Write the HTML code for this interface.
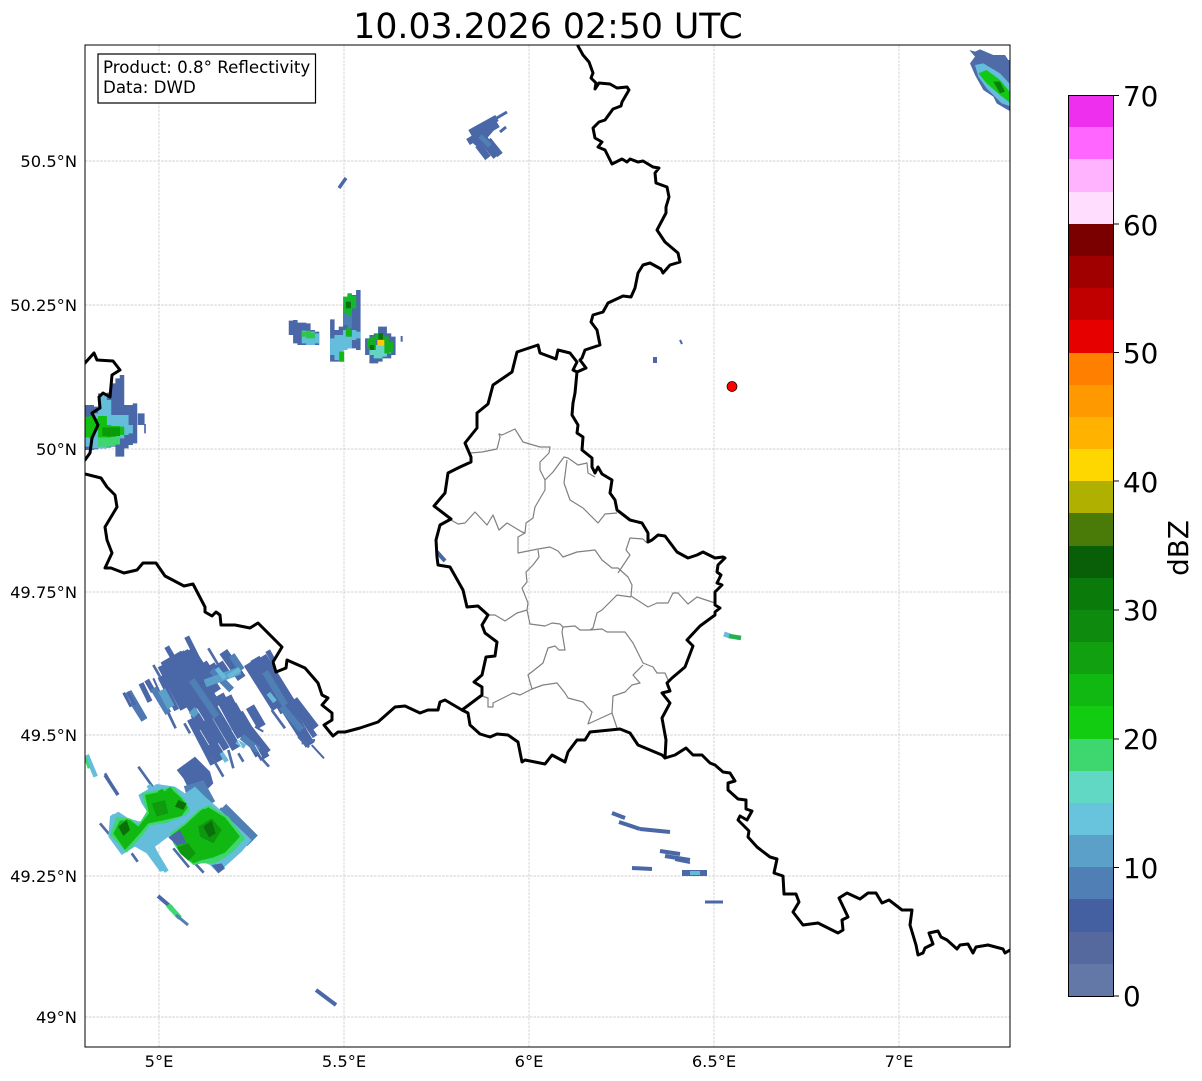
<!DOCTYPE html>
<html><head><meta charset="utf-8"><style>
html,body{margin:0;padding:0;background:#fff}
svg{display:block;font-family:"DejaVu Sans","Liberation Sans",sans-serif}
</style></head><body>
<svg width="1202" height="1081" viewBox="0 0 1202 1081" xmlns="http://www.w3.org/2000/svg">
<rect width="1202" height="1081" fill="#fff"/>
<defs><clipPath id="ax"><rect x="85" y="45" width="925" height="1002"/></clipPath></defs>
<text x="548" y="38" font-size="34.7" text-anchor="middle" fill="#000">10.03.2026 02:50 UTC</text>

<g stroke="#c2c2c2" stroke-width="0.7" stroke-dasharray="2.6 1.2" fill="none">
<path d="M159 45V1047M344 45V1047M529 45V1047M714 45V1047M899 45V1047"/>
<path d="M85 161H1010M85 305H1010M85 449H1010M85 592H1010M85 735H1010M85 876H1010M85 1017H1010"/>
</g>

<g clip-path="url(#ax)">
<!-- SW cluster upper -->
<g transform="translate(85,630) scale(.33333)" fill="none">
<path stroke="#4a67a8" stroke-width="31" d="M232 105L300 235M240 90L345 270M258 80L355 250M275 70L390 260M295 65L395 230M312 60L395 185M352 100L392 160M375 105L405 155M400 100L430 145M320 265L390 400M330 250L410 390M350 240L420 360M375 220L455 355M402 195L470 320M425 200L490 330M440 225L525 375M460 250L540 385M490 300L545 370M490 100L575 235M510 85L600 245M530 80L620 225M560 170L660 325M590 205L675 345"/>
<path stroke="#4a67a8" stroke-width="16" d="M305 20L340 90M245 50L268 90M548 62L565 92M290 65L312 102M168 160L195 215M185 150L205 185M225 140L275 240M620 215L690 320"/>
<path stroke="#4f6ba8" stroke-width="8" d="M370 55L400 105M205 105L225 140M60 430L98 495M160 410L210 480M250 250L272 295M298 280L315 310M380 380L415 440M430 360L445 415M460 370L475 395M525 380L552 410M560 240L600 295M640 320L672 352M650 340L690 330"/>
<path stroke="#4a67a8" stroke-width="6" d="M680 345L717 385M510 290L535 305M205 145L270 290"/>
<path stroke="#4a67a8" stroke-width="28" d="M415 65L470 145M625 210L690 295M495 230L530 290"/>
<path stroke="#4f78b2" stroke-width="20" d="M130 185L178 268M143 215L178 270"/>
<path stroke="#4a67a8" stroke-width="9" d="M116 188L138 230M128 185L150 225"/>
<path stroke="#4f7fb5" stroke-width="20" d="M205 175L250 250M320 150L395 260M470 320L520 360M540 125L600 225M590 230L650 300M380 120L440 180M440 75L470 120"/>
<path stroke="#5ba0c8" stroke-width="24" d="M230 180L258 232M360 160L465 122M320 240L335 255"/>
<path stroke="#68b8da" stroke-width="14" d="M395 115L420 145M430 140L465 118M455 335L480 350M410 368L425 395M550 190L570 215"/>
<path stroke="#fff" stroke-width="2" d="M335 235L358 272M345 300L372 345M440 300L470 350M400 340L425 380M510 345L530 380"/>
<path fill="#4a67a8" d="M275 420L330 380L375 425L385 460L370 475L345 460L310 475L295 445Z"/>
</g>
<!-- SW cluster lower -->
<g transform="translate(85,630) scale(.33333)" fill="none">
<path stroke="#4f6ba8" stroke-width="8" d="M45 580L72 612M140 670L158 695M265 655L312 712M330 700L356 728"/>
<path stroke="#4f7fb5" stroke-width="24" d="M300 480L350 465L380 520M320 470L400 560M415 530L510 625M400 540L495 640"/>
<path fill="#64bddb" d="M160 495L215 462L270 470L300 490L330 470L360 500L395 530L500 630L470 665L420 710L400 730L375 705L340 690L310 650L250 620L210 650L245 722L225 725L185 670L150 650L110 675L70 620L75 560L100 545L130 565L165 575L190 550L170 520Z"/>
<path stroke="#64bddb" stroke-width="14" d="M80 555L115 600M190 465L230 520M200 650L245 725"/>
<path fill="#4a67a8" d="M380 705L410 700L420 715L400 730Z"/>
<path fill="#3ed66e" d="M170 490L265 470L300 510L315 540L300 560L240 580L195 585L170 620L125 668L75 615L95 560L135 565L160 585L185 545Z"/>
<path fill="#12b812" d="M180 495L260 478L290 505L308 532L290 558L240 570L190 580L165 610L120 660L85 610L105 572L135 570L160 590L192 550Z"/>
<path fill="#64bddb" d="M165 640L200 605L245 580L300 555L305 580L250 620L210 650Z"/>
<path fill="#3ed66e" d="M255 610L300 578L340 540L372 525L430 560L480 625L440 670L390 700L350 700L325 705L285 670L265 640Z"/>
<path fill="#12b812" d="M260 615L300 585L340 548L370 532L420 562L465 620L420 668L385 682L345 692L325 700L290 672L270 640Z"/>
<path stroke="#12b812" stroke-width="16" d="M225 480L265 545M250 475L290 535M350 540L400 620M320 570L370 660M120 570L140 610"/>
<path fill="#0e960e" d="M340 590L380 565L410 600L385 640L345 620ZM276 652L310 640L332 670L310 692L288 672Z"/>
<path fill="#0a700a" d="M100 590L125 570L135 600L115 618ZM355 590L380 572L392 610L372 622ZM280 510L305 520L295 540L270 530Z"/>
<path fill="#4a67a8" d="M250 622L285 600L305 640L275 645Z"/>
<path fill="#0e9c0e" d="M200 520L240 510L250 550L215 560Z"/>
</g>
<!-- W edge streak -->
<g transform="translate(85,630) scale(.33333)" fill="none">
<path stroke="#64bddb" stroke-width="14" d="M5 375L32 440"/>
<path stroke="#3ed66e" stroke-width="8" d="M2 385L12 415"/>
</g>
<!-- West cluster -->
<g transform="translate(85,350) scale(.33333)" fill="none" stroke-width="13.500">
<path stroke="#4a67a8" d="M7 165V300M20 165V300M33 170V298M46 130V295M59 130V295M72 128V293M85 100V290M98 85V320M111 75V320M124 165V295M137 165V285M150 160V280M165 190V225M172 190V225"/>
<path stroke="#4a67a8" stroke-width="5" d="M180 222V250"/>
<path stroke="#64bddb" d="M7 205V290M20 200V295M33 190V295M46 135V295M59 135V295M72 150V290M85 195V285M98 195V280M111 195V265M124 195V255M137 225V250"/>
<path stroke="#3ed66e" d="M46 262V290M59 262V290M72 262V290M85 260V288M98 258V284"/>
<path stroke="#12c012" d="M7 200V262M20 198V265M33 205V240M46 198V262M59 198V262M72 225V262M85 228V260M98 228V258M111 230V255"/>
<path stroke="#0a9a0a" d="M59 232V258M72 232V260M85 232V260M98 232V258"/>
</g>
<!-- Central cluster -->
<g transform="translate(280,280) scale(.33333)" fill="none" stroke-width="13.500">
<path stroke="#4a67a8" d="M33 122V165M46 120V190M59 128V195M72 128V195M85 130V195M98 150V195M111 155V195M157 118V245M170 150V245M183 140V245M196 70V205M209 40V205M222 45V205M235 30V210M262 175V225M275 165V250M288 160V250M301 140V245M314 140V235M327 160V235M340 170V225"/>
<path stroke="#4a67a8" stroke-width="6" d="M365 168V185"/>
<path stroke="#64bddb" d="M72 152V190M85 155V195M98 155V195M111 160V190M157 175V225M170 165V240M183 165V245M196 150V210M209 170V205M222 150V180M235 155V175"/>
<path stroke="#4a80b4" d="M196 85V135M209 105V145"/>
<path stroke="#64d4c4" d="M275 185V225M288 195V235M301 195V235M314 195V230M327 190V220"/>
<path stroke="#2cc84a" d="M85 152V175M72 155V170M98 158V175"/>
<path stroke="#14b830" d="M196 50V100M209 42V105M222 48V85"/>
<path stroke="#0a700a" stroke-width="15" d="M205 65V85"/>
<path stroke="#12b812" stroke-width="15" d="M205 145V170M185 215V245"/>
<path stroke="#12b01e" d="M268 175V205M281 170V210M294 160V180M307 165V180M320 170V220M333 185V218"/>
<path stroke="#0a700a" d="M302 160V178M276 195V210"/>
<path fill="#ffc800" stroke="none" d="M292 180L313 180L313 197L292 197Z"/>
</g>
<!-- NE cluster -->
<g transform="translate(950,40) scale(.33333)">
<path fill="#4f6ba8" d="M58 30L75 35L90 28L130 45L165 45L175 60L183 60L183 215L165 205L140 190L130 170L100 150L75 105L60 70L75 50Z"/>
<path fill="#64bddb" d="M75 75L100 70L150 100L183 135L183 200L155 190L110 145L85 110Z"/>
<path fill="#12c812" d="M85 100L110 90L150 120L183 160L183 190L150 165L110 130Z"/>
<path fill="#0a800a" d="M130 125L150 125L165 155L150 160Z"/>
</g>
<!-- North cluster -->
<g fill="none" stroke="#4a67a8">
<path stroke-width="3" d="M507 112L490 122M500 132L506 127"/>
<path stroke-width="7" d="M497 118L470 133M498 124L468 142M478 145L488 158M488 140L500 155"/>
<path stroke-width="9" d="M490 128L475 145M484 140L497 156"/>
</g>
<path stroke="#4f7fb5" stroke-width="5" fill="none" d="M480 136L490 146"/>
<path stroke="#4a67a8" stroke-width="3.500" fill="none" d="M339 188L346 178"/>
<!-- small echoes -->
<g fill="none" stroke="#4a67a8">
<path stroke-width="4" d="M655 357V363M437 552L445 561"/>
<path stroke-width="2" d="M680 340L682 344"/>
<path stroke-width="4" d="M612 813L625 818M619 822L640 829M640 829L670 832M632 868L652 869"/>
<path stroke-width="4" d="M660 851L680 854M665 856L690 860"/>
<path stroke-width="2" d="M675 860L690 863"/>
<path stroke-width="6" d="M682 873H707"/>
<path stroke-width="3" d="M705 902H723"/>
<path stroke-width="4" d="M158 896L172 908M316 990L336 1005"/>
<path stroke-width="3.500" d="M105 775L118 795"/>
</g>
<path stroke="#62bcd8" stroke-width="4" fill="none" d="M690 873H700"/>
<path stroke="#64bddb" stroke-width="5" fill="none" d="M724 634L730 636"/>
<path stroke="#22b050" stroke-width="4.500" fill="none" d="M729 636L741 638"/>
<path stroke="#3ed66e" stroke-width="5" fill="none" d="M168 905L180 918"/>
<path stroke="#4f7fb5" stroke-width="3" fill="none" d="M176 915L188 925"/>

<!-- admin lines -->
<g fill="none" stroke="#808080" stroke-width="1.2" stroke-linejoin="round">
<path d="M470 453L482 452L497 449L500 437L499 434L502 435L515 429L523 442L540 447L550 447L549 453L540 462L540 470L545 480L545 490L535 507L533 518L526 523L525 533L518 537L518 553L538 549L550 547L558 551L563 557L577 552L595 550L602 560L612 568L618 568L628 577L632 585L631 596L648 607L657 603L668 603L673 593L678 593L688 604L697 597L715 603"/>
<path d="M545 480L553 472L564 457L568 458L578 465L587 463L588 473L595 477"/>
<path d="M567 460L564 483L570 500L583 508L598 523L605 514L617 513"/>
<path d="M451 520L458 524L465 523L475 512L487 525L493 515L499 530L507 523L522 532L525 533"/>
<path d="M647 543L643 539L630 538L626 550L630 555L620 570L618 573"/>
<path d="M538 550L539 557L533 565L526 572L527 582L522 588L528 603L527 610L530 624L545 626L552 623L560 624L563 627L575 626L580 630L590 630"/>
<path d="M488 615L495 615L505 621L517 613L527 610"/>
<path d="M631 597L617 595L602 610L597 613L593 628L590 630"/>
<path d="M590 630L602 629L607 632L625 632L633 643L643 663L653 667L657 673L665 673L668 680"/>
<path d="M643 665L633 675L640 683L632 685L625 692L613 696L612 713L617 728"/>
<path d="M612 713L588 724L592 712L583 702L568 698L565 693L557 683L543 685L532 689L528 675L543 663L548 648L555 646L559 650L565 650L562 632L563 627"/>
<path d="M532 689L520 695L513 693L493 703L493 707L488 707L488 698L482 696"/>
</g>
<!-- country borders -->
<g fill="none" stroke="#000" stroke-width="3" stroke-linejoin="round" stroke-linecap="round">
<path d="M578 46L583 55L589 62L593 73L591 78L596 83L595 89L599 83L610 84L617 88L627 87L629 90L622 102L621 106L613 109L605 120L599 122L593 128L595 138L602 142L598 147L605 150L612 164L622 159L627 162L630 159L638 162L643 161L653 167L659 168L655 173L656 183L667 187L669 197L666 207L666 213L657 230L665 242L678 253L680 262L670 265L663 273L661 269L650 263L643 265L638 273L635 288L631 297L623 296L608 303L603 312L593 315L591 322L597 330L600 345L585 350L582 358L580 360L586 368L577 372L573 370L577 362L570 353L558 350L556 359L540 353L538 345L517 352L512 372L493 385L488 404L477 413L477 428L465 443L471 457L471 462L460 467L448 473L445 493L434 506L451 519L440 525L436 540L437 557L438 565L450 567L463 590L467 607L478 606L488 615L482 625L485 633L497 642L495 656L486 657L482 675L474 682L482 687L482 695L462 710L468 713L470 725L480 734L490 737L497 734L508 735L518 742L522 762L525 760L545 764L552 755L565 762L568 752L577 740L585 740L590 732L620 729L630 733L638 745L662 755L665 758L666 740L662 718L670 703L662 693L670 691L667 683L672 678L685 667L693 646L687 640L700 626L715 615L715 612L720 608L715 605L715 592L722 585L717 583L721 575L717 572L718 565L725 558L723 557L715 558L703 552L697 555L688 558L677 552L665 536L658 535L652 540L648 542L648 533L642 523L630 520L617 510L615 500L610 493L612 480L602 474L598 467L595 473L592 467L592 458L582 450L583 437L577 433L578 425L572 415L573 403L575 393L577 372"/>
<path d="M665 758L675 755L686 748L693 755L702 755L710 763L715 765L723 772L730 773L735 781L728 783L728 790L738 799L746 800L746 809L752 811L747 820L740 816L738 820L749 831L748 837L757 847L770 857L777 859L774 873L783 876L784 894L796 894L799 902L793 912L803 925L818 923L838 933L843 930L842 920L848 917L839 898L847 893L860 899L868 893L876 893L882 903L889 900L902 910L912 910L910 925L916 945L918 955L923 953L925 948L933 944L929 933L938 931L941 937L947 940L957 949L960 945L968 944L973 953L976 947L988 945L1003 949L1005 953L1010 950"/>
<path d="M85 474L101 478L107 487L115 495L117 507L105 527L107 540L112 553L105 568L111 568L124 573L137 570L143 563L156 563L165 576L184 586L193 584L205 607L205 612L212 616L216 612L220 615L221 625L235 625L250 628L258 623L282 647L273 662L276 672L286 668L287 660L305 668L318 683L322 695L328 698L322 705L332 713L332 720L324 725L333 736L338 732L345 732L360 728L378 722L395 707L405 706L420 713L428 710L438 710L440 702L445 700L462 710"/>
<path d="M85 363L94 353L97 360L113 361L120 370L112 375L110 397L103 393L99 397L100 408L92 413L98 425L92 438L90 453L85 460"/>
</g>
<circle cx="732" cy="386.500" r="5" fill="#f00" stroke="#000" stroke-width="0.7"/>
</g>

<rect x="85" y="45" width="925" height="1002" fill="none" stroke="#000" stroke-width="1"/>
<rect x="98" y="54" width="217.500" height="49" fill="#fff" stroke="#000" stroke-width="1.200"/>
<text font-size="16.670" fill="#000"><tspan x="103" y="73">Product: 0.8° Reflectivity</tspan><tspan x="103" y="93">Data: DWD</tspan></text>

<g font-size="16.300" fill="#000" text-anchor="end">
<text x="77" y="167">50.5°N</text><text x="77" y="311">50.25°N</text><text x="77" y="455">50°N</text><text x="77" y="598">49.75°N</text><text x="77" y="741">49.5°N</text><text x="77" y="882">49.25°N</text><text x="77" y="1023">49°N</text>
</g>
<g font-size="16.300" fill="#000" text-anchor="middle">
<text x="159" y="1067">5°E</text><text x="344" y="1067">5.5°E</text><text x="529" y="1067">6°E</text><text x="714" y="1067">6.5°E</text><text x="899" y="1067">7°E</text>
</g>

<!-- colorbar -->
<g shape-rendering="crispEdges">
<rect x="1068" y="95" width="45" height="33" fill="#ee2fee"/>
<rect x="1068" y="127" width="45" height="33" fill="#ff66ff"/>
<rect x="1068" y="159" width="45" height="33" fill="#ffb3ff"/>
<rect x="1068" y="192" width="45" height="33" fill="#ffddff"/>
<rect x="1068" y="224" width="45" height="33" fill="#7a0000"/>
<rect x="1068" y="256" width="45" height="33" fill="#a00000"/>
<rect x="1068" y="288" width="45" height="33" fill="#c00000"/>
<rect x="1068" y="320" width="45" height="33" fill="#e60000"/>
<rect x="1068" y="353" width="45" height="33" fill="#ff7f00"/>
<rect x="1068" y="385" width="45" height="33" fill="#ff9900"/>
<rect x="1068" y="417" width="45" height="33" fill="#ffb300"/>
<rect x="1068" y="449" width="45" height="33" fill="#ffd700"/>
<rect x="1068" y="481" width="45" height="33" fill="#b0b000"/>
<rect x="1068" y="513" width="45" height="33" fill="#4a7a08"/>
<rect x="1068" y="546" width="45" height="33" fill="#085f08"/>
<rect x="1068" y="578" width="45" height="33" fill="#0a7a0a"/>
<rect x="1068" y="610" width="45" height="33" fill="#0e8a0e"/>
<rect x="1068" y="642" width="45" height="33" fill="#10a010"/>
<rect x="1068" y="674" width="45" height="33" fill="#12b812"/>
<rect x="1068" y="706" width="45" height="33" fill="#12cc12"/>
<rect x="1068" y="739" width="45" height="33" fill="#3ed66e"/>
<rect x="1068" y="771" width="45" height="33" fill="#60d8c4"/>
<rect x="1068" y="803" width="45" height="33" fill="#68c4dc"/>
<rect x="1068" y="835" width="45" height="33" fill="#5ba0c8"/>
<rect x="1068" y="867" width="45" height="33" fill="#4f7fb5"/>
<rect x="1068" y="899" width="45" height="33" fill="#4560a0"/>
<rect x="1068" y="932" width="45" height="33" fill="#55699f"/>
<rect x="1068" y="964" width="45" height="32" fill="#6478a8"/>
</g>
<rect x="1068.500" y="95.500" width="45" height="901" fill="none" stroke="#000" stroke-width="1"/>
<path stroke="#000" stroke-width="1" d="M1113 95.500H1119M1113 224H1119M1113 352.500H1119M1113 481H1119M1113 610H1119M1113 739H1119M1113 867.500H1119M1113 996H1119"/>
<g font-size="27.800" fill="#000">
<text x="1123" y="106">70</text><text x="1123" y="235">60</text><text x="1123" y="363">50</text><text x="1123" y="492">40</text><text x="1123" y="620">30</text><text x="1123" y="749">20</text><text x="1123" y="878">10</text><text x="1123" y="1006">0</text>
</g>
<text transform="translate(1188,548) rotate(-90)" font-size="27.800" text-anchor="middle" fill="#000">dBZ</text>
</svg>
</body></html>
